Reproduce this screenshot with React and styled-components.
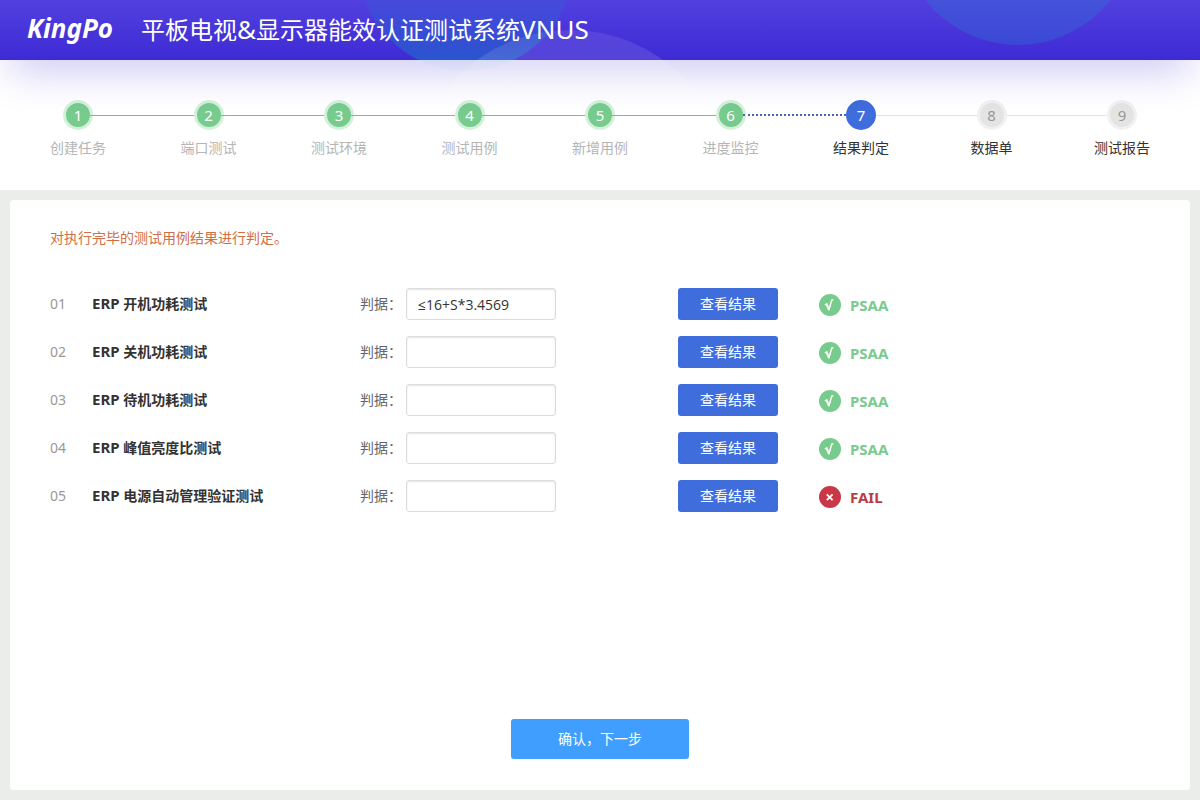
import React, { useState } from "react";
import styled, { createGlobalStyle, css } from "styled-components";

const GlobalStyle = createGlobalStyle`
  *, *::before, *::after { box-sizing: border-box; }
  body {
    margin: 0;
    background: #ebedea;
    color: #333;
    font-family: "Noto Sans", "Open Sans", "Noto Sans CJK SC", sans-serif;
    font-size: 14px;
    line-height: 20px;
  }
  button, input { font: inherit; }
`;

const Page = styled.div`
  display: flex;
  flex-direction: column;
  min-height: 100vh;
`;

const Header = styled.header`
  position: relative;
  z-index: 1;
  display: flex;
  align-items: center;
  gap: 28px;
  height: 60px;
  padding: 0 27px;
  color: #fff;
  background: linear-gradient(#5140df, #3e2ad4);
  box-shadow: 0 20px 40px -10px rgba(62, 42, 212, 0.28);
`;

const Backdrop = styled.svg`
  position: absolute;
  top: 0;
  left: 0;
  width: 1200px;
  max-width: 100%;
  height: 100px;
  pointer-events: none;
`;

const Logo = styled.span`
  position: relative;
  font-size: 26px;
  line-height: 32px;
  padding-bottom: 4px;
  font-weight: 700;
  font-style: italic;
`;

const Title = styled.h1`
  position: relative;
  margin: 0;
  font-size: 24px;
  line-height: 32px;
  font-weight: 400;
  white-space: nowrap;
`;

const TitleLatin = styled.span`
  font-size: 26px;
  line-height: 28px;
`;

const Steps = styled.ol`
  display: flex;
  height: 130px;
  margin: 0;
  padding: 40px 50px 0;
  list-style: none;
  background: #fff;
`;

const Step = styled.li`
  flex: 1;
  display: grid;
  grid-template-columns: 56px 1fr;
  grid-template-rows: 30px 20px;
  row-gap: 8px;
  align-items: center;

  &:last-child { flex: 0 0 56px; }
`;

const tones = {
  done: css`
    background: #77cb8d;
    border: 3px solid #d3f0da;
    color: #fff;
  `,
  current: css`
    background: #3f6ddc;
    border: 3px solid #3f6ddc;
    color: #fff;
  `,
  todo: css`
    background: #e4e4e4;
    border: 3px solid #f1f1f1;
    color: #999;
  `,
};

const Marker = styled.span`
  grid-area: 1 / 1;
  justify-self: center;
  display: flex;
  align-items: center;
  justify-content: center;
  width: 30px;
  height: 30px;
  border-radius: 50%;
  font-size: 15px;
  ${(p) => tones[p.$tone]}
`;

const lines = {
  solid: "1px solid #6fc486",
  dotted: "2px dotted #4766b5",
  plain: "1px solid #e0e0e0",
};

const Connector = styled.span`
  grid-area: 1 / 1 / 2 / 3;
  margin: 0 -13px 0 ${(p) => (p.$line === "plain" ? 43 : 40)}px;
  border-top: ${(p) => lines[p.$line]};
`;

const StepLabel = styled.span`
  grid-area: 2 / 1;
  text-align: center;
  white-space: nowrap;
  color: ${(p) => (p.$muted ? "#b5b5b5" : "#333")};
`;

const Panel = styled.main`
  flex: 1;
  display: flex;
  flex-direction: column;
  margin: 10px;
  padding: 28px 40px 31px;
  border-radius: 4px;
  background: #fff;
`;

const Hint = styled.p`
  margin: 0 0 40px;
  color: #cf6f48;
`;

const Cases = styled.ol`
  display: flex;
  flex-direction: column;
  gap: 16px;
  margin: 0 0 40px;
  padding: 0;
  list-style: none;
`;

const CaseRow = styled.li`
  display: grid;
  grid-template-columns: 42px 268px 46px 150px 122px 100px 41px 1fr;
  align-items: center;
  height: 32px;
`;

const Index = styled.span`
  color: #999;
`;

const CaseName = styled.strong`
  font-weight: 700;
`;

const Standard = styled.span`
  font-size: 15px;
  line-height: 18px;
`;

const CriterionLabel = styled.label`
  color: #666;
  white-space: nowrap;
`;

const CriterionInput = styled.input`
  width: 100%;
  height: 32px;
  padding: 0 11px;
  border: 1px solid #dcdcdc;
  border-radius: 3px;
  background: #fff;
  color: #333;
  font-family: "Open Sans", "Noto Sans", "Noto Sans CJK SC", sans-serif;
  box-shadow: inset 0 1px 2px rgba(0, 0, 0, 0.1);
  outline: none;

  &:focus { border-color: #3f6ddc; }
`;

const ResultButton = styled.button`
  grid-column: 6;
  height: 32px;
  padding: 0;
  border: 0;
  border-radius: 3px;
  background: #3f6ddc;
  color: #fff;
  cursor: pointer;
`;

const Verdict = styled.span`
  grid-column: 8;
  display: flex;
  align-items: center;
  gap: 9px;
  padding-top: 2px;
  font-size: 15px;
  font-weight: 700;
  color: ${(p) => (p.$pass ? "#77cb8d" : "#b93a48")};
`;

const NextButton = styled.button`
  align-self: center;
  width: 178px;
  height: 40px;
  margin-top: auto;
  padding: 0;
  border: 0;
  border-radius: 3px;
  background: #409eff;
  color: #fff;
  cursor: pointer;
`;

const steps = [
  { label: "创建任务", tone: "done", line: "solid" },
  { label: "端口测试", tone: "done", line: "solid" },
  { label: "测试环境", tone: "done", line: "solid" },
  { label: "测试用例", tone: "done", line: "solid" },
  { label: "新增用例", tone: "done", line: "solid" },
  { label: "进度监控", tone: "done", line: "dotted" },
  { label: "结果判定", tone: "current", line: "plain" },
  { label: "数据单", tone: "todo", line: "plain" },
  { label: "测试报告", tone: "todo" },
];

const cases = [
  { id: "01", standard: "ERP", name: "开机功耗测试", criterion: "≤16+S*3.4569", pass: true },
  { id: "02", standard: "ERP", name: "关机功耗测试", criterion: "", pass: true },
  { id: "03", standard: "ERP", name: "待机功耗测试", criterion: "", pass: true },
  { id: "04", standard: "ERP", name: "峰值亮度比测试", criterion: "", pass: true },
  { id: "05", standard: "ERP", name: "电源自动管理验证测试", criterion: "", pass: false },
];

function HeaderBackdrop() {
  return (
    <Backdrop viewBox="0 0 1200 100" preserveAspectRatio="xMinYMin slice" aria-hidden="true">
      <defs>
        <linearGradient id="teal" gradientUnits="userSpaceOnUse" x1="0" y1="0" x2="0" y2="71">
          <stop offset="0" stopColor="#2f62d0" stopOpacity="0.28" />
          <stop offset="0.84" stopColor="#1b79cb" stopOpacity="0.55" />
          <stop offset="0.85" stopColor="#9fd0ee" stopOpacity="0.16" />
          <stop offset="1" stopColor="#9fd0ee" stopOpacity="0.1" />
        </linearGradient>
        <linearGradient id="haze" gradientUnits="userSpaceOnUse" x1="0" y1="30" x2="0" y2="100">
          <stop offset="0" stopColor="#fff" stopOpacity="0.08" />
          <stop offset="0.42" stopColor="#fff" stopOpacity="0.12" />
          <stop offset="1" stopColor="#fff" stopOpacity="0.1" />
        </linearGradient>
      </defs>
      <circle cx="466" cy="-37" r="108" fill="url(#teal)" />
      <circle cx="570" cy="189" r="159" fill="url(#haze)" />
      <circle cx="1018" cy="-73" r="118" fill="#2f74d4" fillOpacity="0.36" />
    </Backdrop>
  );
}

function VerdictIcon({ pass }) {
  return (
    <svg width="22" height="22" viewBox="0 0 22 22" fill="none" aria-hidden="true">
      <circle cx="11" cy="11" r="11" fill={pass ? "#77cb8d" : "#c93847"} />
      {pass ? (
        <>
          <path d="M5.8 10.8 8 9.9" stroke="#fff" strokeWidth="1.4" />
          <path d="M7.5 9.6 9.9 15.8" stroke="#fff" strokeWidth="2" />
          <path d="M9.8 16.4 12.8 5.9 14.4 5.9" stroke="#fff" strokeWidth="1.5" />
        </>
      ) : (
        <path d="M7.8 8.3 13.6 14.1M13.6 8.3 7.8 14.1" stroke="#fff" strokeWidth="1.8" />
      )}
    </svg>
  );
}

function CaseItem({ item }) {
  const [criterion, setCriterion] = useState(item.criterion);
  const inputId = `criterion-${item.id}`;
  return (
    <CaseRow>
      <Index>{item.id}</Index>
      <CaseName>
        <Standard>{item.standard}</Standard> {item.name}
      </CaseName>
      <CriterionLabel htmlFor={inputId}>判据：</CriterionLabel>
      <CriterionInput
        id={inputId}
        type="text"
        value={criterion}
        onChange={(e) => setCriterion(e.target.value)}
      />
      <ResultButton type="button">查看结果</ResultButton>
      <Verdict $pass={item.pass}>
        <VerdictIcon pass={item.pass} />
        {item.pass ? "PSAA" : "FAIL"}
      </Verdict>
    </CaseRow>
  );
}

export default function App() {
  return (
    <Page lang="zh-CN">
      <GlobalStyle />
      <Header>
        <HeaderBackdrop />
        <Logo>KingPo</Logo>
        <Title>
          平板电视<TitleLatin>&amp;</TitleLatin>显示器能效认证测试系统<TitleLatin>VNUS</TitleLatin>
        </Title>
      </Header>
      <Steps>
        {steps.map((step, i) => (
          <Step key={step.label} aria-current={step.tone === "current" ? "step" : undefined}>
            <Marker $tone={step.tone}>{i + 1}</Marker>
            {step.line && <Connector $line={step.line} />}
            <StepLabel $muted={step.tone === "done"}>{step.label}</StepLabel>
          </Step>
        ))}
      </Steps>
      <Panel>
        <Hint>对执行完毕的测试用例结果进行判定。</Hint>
        <Cases>
          {cases.map((item) => (
            <CaseItem key={item.id} item={item} />
          ))}
        </Cases>
        <NextButton type="button">确认，下一步</NextButton>
      </Panel>
    </Page>
  );
}
